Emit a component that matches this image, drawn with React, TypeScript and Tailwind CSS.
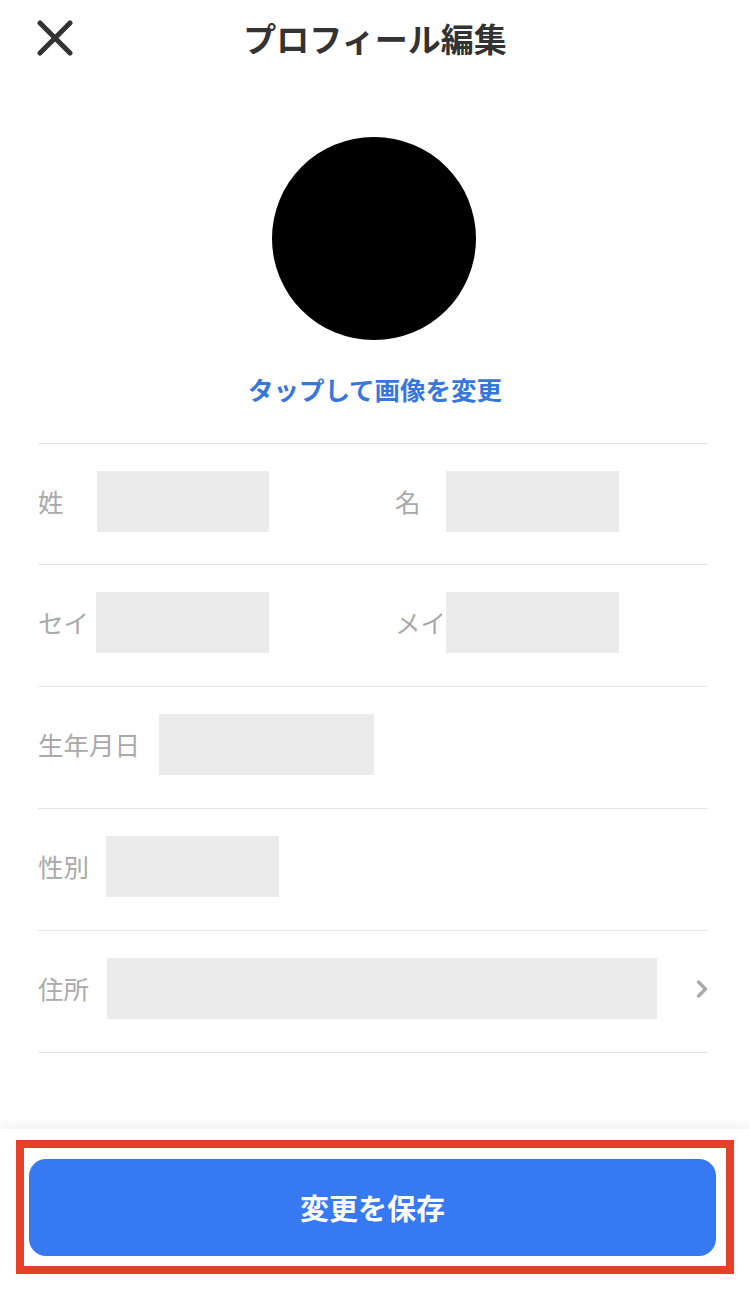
import { ChevronRight } from "lucide-react"

function CloseIcon() {
  return (
    <svg width="36" height="36" viewBox="0 0 36 36" fill="none">
      <path d="M3 3L33 33M33 3L3 33" stroke="#333333" strokeWidth="5" strokeLinecap="round" />
    </svg>
  )
}

function Box({ w }: { w: string }) {
  return <div className={`h-[61px] bg-[#ebebeb] ${w}`} />
}

export default function App() {
  return (
    <div
      className="w-[750px] h-[1289px] bg-white flex flex-col overflow-hidden"
      style={{ fontFamily: '"Noto Sans CJK JP", "Noto Sans", sans-serif' }}
    >
      {/* Header */}
      <div className="grid grid-cols-[1fr_auto_1fr] items-center h-[76px]">
        <div className="pl-[37px] flex items-center">
          <CloseIcon />
        </div>
        <h1 className="text-[33px] font-bold text-[#333333] leading-none">プロフィール編集</h1>
        <div />
      </div>

      {/* Avatar */}
      <div className="flex flex-col items-center">
        <div className="mt-[61px] w-[204px] h-[203px] rounded-full bg-black mr-[3px]" />
        <button className="mt-[31px] text-[25.5px] leading-[36px] font-bold text-[#3577dd]">
          タップして画像を変更
        </button>
      </div>

      {/* Form */}
      <div className="mt-[36px] ml-[38px] mr-[42px] border-t border-[#e6e6e6] text-[#a9a9a9] text-[25.5px]">
        <div className="h-[121px] pb-[6px] border-b border-[#e6e6e6] flex items-center">
          <div className="w-[357px] flex items-center">
            <span className="w-[59px]">姓</span>
            <Box w="w-[172px]" />
          </div>
          <div className="flex items-center">
            <span className="w-[51px]">名</span>
            <Box w="w-[173px]" />
          </div>
        </div>
        <div className="h-[122px] pb-[6px] border-b border-[#e6e6e6] flex items-center">
          <div className="w-[357px] flex items-center">
            <span className="w-[58px]">セイ</span>
            <Box w="w-[173px]" />
          </div>
          <div className="flex items-center">
            <span className="w-[51px]">メイ</span>
            <Box w="w-[173px]" />
          </div>
        </div>
        <div className="h-[122px] pb-[6px] border-b border-[#e6e6e6] flex items-center">
          <span className="w-[121px]">生年月日</span>
          <Box w="w-[215px]" />
        </div>
        <div className="h-[122px] pb-[6px] border-b border-[#e6e6e6] flex items-center">
          <span className="w-[68px]">性別</span>
          <Box w="w-[173px]" />
        </div>
        <div className="h-[122px] pb-[6px] border-b border-[#e6e6e6] flex items-center">
          <span className="w-[69px]">住所</span>
          <Box w="w-[550px]" />
          <ChevronRight className="ml-auto w-[28px] h-[28px] text-[#aaaaaa] -mr-[8px]" strokeWidth={3} />
        </div>
      </div>

      {/* Bottom bar */}
      <div className="mt-auto bg-white shadow-[0_-5px_10px_rgba(0,0,0,0.05)] pt-[11px] pb-[15px]">
        <div className="mx-[16px] border-[8px] border-[#e5402a] pl-[5px] pr-[10px] pt-[11px] pb-[10px]">
          <button className="w-full h-[97px] rounded-[17px] bg-[#3779f0] text-white text-[29px] font-bold">
            変更を保存
          </button>
        </div>
      </div>
    </div>
  )
}
